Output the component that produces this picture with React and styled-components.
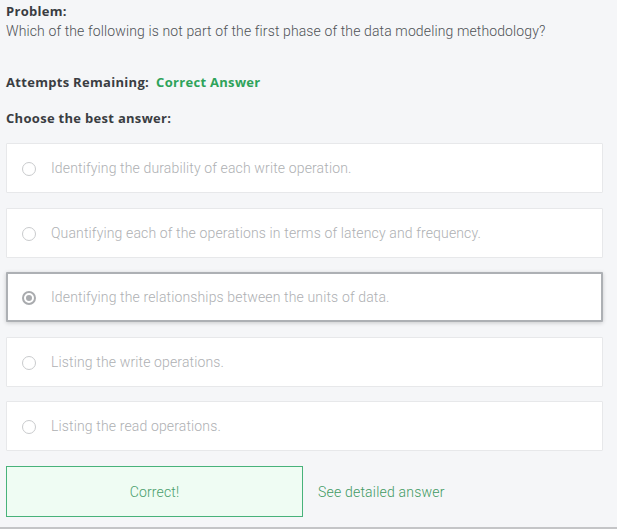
import React from "react";
import styled, { createGlobalStyle } from "styled-components";

const Global = createGlobalStyle`
  html, body { margin: 0; padding: 0; background: #f5f6f8; }
  body { font-family: Roboto, "Liberation Sans", sans-serif; }
`;

const Page = styled.div`
  display: flex;
  flex-direction: column;
  padding: 2px 14px 10px 6px;
  border-bottom: 2px solid #c4c5c7;
  background: #f5f6f8;
`;

const Label = styled.div`
  font-family: "Open Sans", Lato, sans-serif;
  font-weight: 700;
  font-size: 13px;
  line-height: 18px;
  letter-spacing: 0.3px;
  color: #3a3d42;
  margin-top: ${(p) => p.$mt || 0}px;
`;

const Question = styled.div`
  font-size: 14px;
  font-weight: 300;
  line-height: 20px;
  letter-spacing: 0.12px;
  color: #4f5256;
  margin-top: 1px;
`;

const Green = styled.span`
  color: #2ea35a;
  margin-left: 7px;
`;

const Options = styled.div`
  display: flex;
  flex-direction: column;
  gap: 14.5px;
  margin-top: 16px;
`;

const Card = styled.div`
  box-sizing: border-box;
  height: 50px;
  display: flex;
  align-items: center;
  gap: 15px;
  padding-left: ${(p) => (p.$selected ? 14 : 15)}px;
  background: #fff;
  border: ${(p) => (p.$selected ? "2px solid #adb0b4" : "1px solid #e7e8ea")};
  box-shadow: ${(p) => (p.$selected ? "0 1px 4px rgba(0,0,0,0.18)" : "none")};
  border-radius: 1px;
  font-size: 14px;
  font-weight: 300;
  letter-spacing: 0.14px;
  color: #aeb0b3;
`;

const Radio = styled.span`
  box-sizing: border-box;
  flex: none;
  width: 14px;
  height: 14px;
  border-radius: 50%;
  border: ${(p) => (p.$checked ? "2px solid #a9abae" : "1px solid #c9cbcd")};
  display: flex;
  align-items: center;
  justify-content: center;
  margin-top: 2px;
  &::after {
    content: "";
    display: ${(p) => (p.$checked ? "block" : "none")};
    width: 6px;
    height: 6px;
    border-radius: 50%;
    background: #a9abae;
  }
`;

const Footer = styled.div`
  display: flex;
  align-items: center;
  margin-top: 15px;
`;

const ResultBox = styled.div`
  box-sizing: border-box;
  width: 297px;
  height: 51px;
  display: flex;
  align-items: center;
  justify-content: center;
  background: #effcf3;
  border: 1px solid #48b27a;
  color: #4a9e6c;
  font-size: 14px;
  font-weight: 300;
  letter-spacing: 0.15px;
`;

const Link = styled.a`
  margin-left: 15px;
  font-size: 14px;
  font-weight: 300;
  letter-spacing: 0.2px;
  color: #3f9a63;
  text-decoration: none;
`;

const options = [
  "Identifying the durability of each write operation.",
  "Quantifying each of the operations in terms of latency and frequency.",
  "Identifying the relationships between the units of data.",
  "Listing the write operations.",
  "Listing the read operations.",
];

export default function App() {
  return (
    <>
      <Global />
      <Page>
        <Label>Problem:</Label>
        <Question>
          Which of the following is not part of the first phase of the data modeling methodology?
        </Question>
        <Label $mt={32}>
          Attempts Remaining:<Green>Correct Answer</Green>
        </Label>
        <Label $mt={18}>Choose the best answer:</Label>
        <Options>
          {options.map((o, i) => (
            <Card key={i} $selected={i === 2}>
              <Radio $checked={i === 2} />
              {o}
            </Card>
          ))}
        </Options>
        <Footer>
          <ResultBox>Correct!</ResultBox>
          <Link href="#">See detailed answer</Link>
        </Footer>
      </Page>
    </>
  );
}
